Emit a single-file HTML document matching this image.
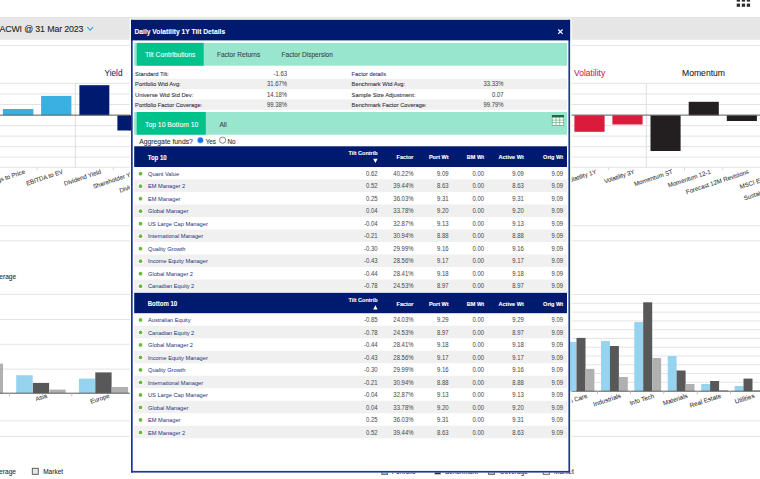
<!DOCTYPE html><html><head><meta charset="utf-8"><style>html,body{margin:0;padding:0;width:760px;height:479px;overflow:hidden;background:#fff}svg{display:block;font-family:"Liberation Sans",sans-serif}</style></head><body><svg width="760" height="479" viewBox="0 0 760 479" font-family="Liberation Sans, sans-serif"><rect x="736.70" y="-1.60" width="3.30" height="3.20" fill="#2b2b2b"/>
<rect x="736.70" y="3.60" width="3.30" height="3.20" fill="#2b2b2b"/>
<rect x="741.80" y="-1.60" width="3.30" height="3.20" fill="#2b2b2b"/>
<rect x="741.80" y="3.60" width="3.30" height="3.20" fill="#2b2b2b"/>
<rect x="746.80" y="-1.60" width="3.30" height="3.20" fill="#2b2b2b"/>
<rect x="746.80" y="3.60" width="3.30" height="3.20" fill="#2b2b2b"/>
<rect x="0.00" y="16.90" width="760.00" height="22.80" fill="#e6e6e6"/>
<text transform="translate(-0.60 31.80) scale(0.91 1)" font-size="9.7" fill="#262626" stroke="#262626" stroke-width="0.12" letter-spacing="-0.15">ACWI @ 31 Mar 2023</text>
<path d="M87.3 27.2 L90.15 30.2 L93.0 27.2" stroke="#35a5dc" stroke-width="1.2" fill="none"/>
<rect x="0.00" y="45.00" width="760.00" height="1.00" fill="#e8e8e8"/>
<text x="104.60" y="76.00" font-size="8.2" fill="#1f2b72" stroke="#1f2b72" stroke-width="0.08">Yield</text>
<text x="574.00" y="75.70" font-size="8.5" fill="#dc1a3c" stroke="#dc1a3c" stroke-width="0.08">Volatility</text>
<text x="682.00" y="75.70" font-size="8.6" fill="#222222" stroke="#222222" stroke-width="0.08">Momentum</text>
<rect x="0.00" y="82.80" width="760.00" height="1.00" fill="#e4e4e4"/>
<rect x="0.00" y="93.40" width="760.00" height="1.00" fill="#e4e4e4"/>
<rect x="0.00" y="104.00" width="760.00" height="1.00" fill="#e4e4e4"/>
<rect x="0.00" y="125.10" width="760.00" height="1.00" fill="#e4e4e4"/>
<rect x="0.00" y="135.60" width="760.00" height="1.00" fill="#e4e4e4"/>
<rect x="0.00" y="146.20" width="760.00" height="1.00" fill="#e4e4e4"/>
<rect x="0.00" y="156.60" width="760.00" height="1.00" fill="#e4e4e4"/>
<rect x="0.00" y="166.80" width="760.00" height="1.00" fill="#e4e4e4"/>
<rect x="74.85" y="83.00" width="0.90" height="84.30" fill="#dcdcdc"/>
<rect x="645.85" y="83.00" width="0.90" height="84.30" fill="#dcdcdc"/>
<rect x="36.70" y="167.30" width="0.80" height="3.00" fill="#cfcfcf"/>
<rect x="112.80" y="167.30" width="0.80" height="3.00" fill="#cfcfcf"/>
<rect x="607.90" y="167.30" width="0.80" height="3.00" fill="#cfcfcf"/>
<rect x="684.10" y="167.30" width="0.80" height="3.00" fill="#cfcfcf"/>
<rect x="722.40" y="167.30" width="0.80" height="3.00" fill="#cfcfcf"/>
<rect x="2.90" y="109.00" width="30.50" height="6.30" fill="#3aafe2"/>
<rect x="41.10" y="95.90" width="30.30" height="19.40" fill="#3aafe2"/>
<rect x="79.40" y="85.20" width="29.90" height="30.10" fill="#001a70"/>
<rect x="117.40" y="115.30" width="30.10" height="15.20" fill="#001a70"/>
<rect x="574.40" y="115.30" width="30.20" height="16.50" fill="#dc1a3c"/>
<rect x="612.40" y="115.30" width="30.20" height="9.20" fill="#dc1a3c"/>
<rect x="650.50" y="115.30" width="30.10" height="35.70" fill="#231f20"/>
<rect x="688.70" y="101.80" width="30.10" height="13.50" fill="#231f20"/>
<rect x="726.80" y="115.30" width="30.10" height="5.70" fill="#231f20"/>
<rect x="0.00" y="114.60" width="760.00" height="1.00" fill="#5c5c5c"/>
<text x="25.40" y="173.40" font-size="6.15" text-anchor="end" fill="#333333" stroke="#333333" stroke-width="0.06" transform="rotate(-18.5 25.40 173.40)">Earnings to Price</text>
<text x="63.50" y="173.40" font-size="6.15" text-anchor="end" fill="#333333" stroke="#333333" stroke-width="0.06" transform="rotate(-18.5 63.50 173.40)">EBITDA to EV</text>
<text x="101.60" y="173.40" font-size="6.15" text-anchor="end" fill="#333333" stroke="#333333" stroke-width="0.06" transform="rotate(-18.5 101.60 173.40)">Dividend Yield</text>
<text x="139.70" y="173.40" font-size="6.15" text-anchor="end" fill="#333333" stroke="#333333" stroke-width="0.06" transform="rotate(-18.5 139.70 173.40)">Shareholder Yield</text>
<text x="177.80" y="173.40" font-size="6.15" text-anchor="end" fill="#333333" stroke="#333333" stroke-width="0.06" transform="rotate(-18.5 177.80 173.40)">Dividend Payout Ratio</text>
<text x="596.90" y="173.40" font-size="6.15" text-anchor="end" fill="#333333" stroke="#333333" stroke-width="0.06" transform="rotate(-18.5 596.90 173.40)">Volatility 1Y</text>
<text x="635.00" y="173.40" font-size="6.15" text-anchor="end" fill="#333333" stroke="#333333" stroke-width="0.06" transform="rotate(-18.5 635.00 173.40)">Volatility 3Y</text>
<text x="673.10" y="173.40" font-size="6.15" text-anchor="end" fill="#333333" stroke="#333333" stroke-width="0.06" transform="rotate(-18.5 673.10 173.40)">Momentum ST</text>
<text x="711.20" y="173.40" font-size="6.15" text-anchor="end" fill="#333333" stroke="#333333" stroke-width="0.06" transform="rotate(-18.5 711.20 173.40)">Momentum 12-1</text>
<text x="749.30" y="173.40" font-size="6.15" text-anchor="end" fill="#333333" stroke="#333333" stroke-width="0.06" transform="rotate(-18.5 749.30 173.40)">Forecast 12M Revisions</text>
<text x="787.40" y="173.40" font-size="6.15" text-anchor="end" fill="#333333" stroke="#333333" stroke-width="0.06" transform="rotate(-18.5 787.40 173.40)">MSCI ESG Rating</text>
<text x="825.50" y="173.40" font-size="6.15" text-anchor="end" fill="#333333" stroke="#333333" stroke-width="0.06" transform="rotate(-18.5 825.50 173.40)">Sustainalytics ESG Risk Rating</text>
<rect x="0.00" y="225.20" width="760.00" height="1.00" fill="#e4e4e4"/>
<rect x="0.00" y="240.30" width="760.00" height="1.00" fill="#e4e4e4"/>
<text x="16.20" y="278.80" font-size="6.6" text-anchor="end" fill="#2a2a2a" stroke="#2a2a2a" stroke-width="0.08">Average</text>
<rect x="0.00" y="293.90" width="300.00" height="1.00" fill="#e4e4e4"/>
<rect x="0.00" y="319.00" width="300.00" height="1.00" fill="#e4e4e4"/>
<rect x="0.00" y="343.80" width="300.00" height="1.00" fill="#e4e4e4"/>
<rect x="0.00" y="368.60" width="300.00" height="1.00" fill="#e4e4e4"/>
<rect x="-5.00" y="363.60" width="8.00" height="29.60" fill="#b0b0b0"/>
<rect x="16.20" y="375.20" width="16.50" height="18.00" fill="#95d3ef"/>
<rect x="32.90" y="382.90" width="16.20" height="10.30" fill="#585858"/>
<rect x="49.50" y="389.60" width="16.10" height="3.60" fill="#b0b0b0"/>
<rect x="78.90" y="378.60" width="16.20" height="14.60" fill="#95d3ef"/>
<rect x="95.30" y="372.40" width="16.30" height="20.80" fill="#585858"/>
<rect x="111.90" y="387.00" width="16.20" height="6.20" fill="#b0b0b0"/>
<rect x="0.00" y="392.70" width="300.00" height="1.00" fill="#5a5a5a"/>
<rect x="9.00" y="393.20" width="0.80" height="3.20" fill="#b8b8b8"/>
<rect x="71.40" y="393.20" width="0.80" height="3.20" fill="#b8b8b8"/>
<text x="47.60" y="397.50" font-size="6.2" text-anchor="end" fill="#333333" stroke="#333333" stroke-width="0.06" transform="rotate(-18.5 47.60 397.50)">Asia</text>
<text x="110.00" y="397.50" font-size="6.2" text-anchor="end" fill="#333333" stroke="#333333" stroke-width="0.06" transform="rotate(-18.5 110.00 397.50)">Europe</text>
<rect x="300.00" y="294.10" width="460.00" height="1.00" fill="#e4e4e4"/>
<rect x="300.00" y="302.87" width="460.00" height="1.00" fill="#e4e4e4"/>
<rect x="300.00" y="311.64" width="460.00" height="1.00" fill="#e4e4e4"/>
<rect x="300.00" y="320.41" width="460.00" height="1.00" fill="#e4e4e4"/>
<rect x="300.00" y="329.18" width="460.00" height="1.00" fill="#e4e4e4"/>
<rect x="300.00" y="337.95" width="460.00" height="1.00" fill="#e4e4e4"/>
<rect x="300.00" y="346.72" width="460.00" height="1.00" fill="#e4e4e4"/>
<rect x="300.00" y="355.49" width="460.00" height="1.00" fill="#e4e4e4"/>
<rect x="300.00" y="364.26" width="460.00" height="1.00" fill="#e4e4e4"/>
<rect x="300.00" y="373.03" width="460.00" height="1.00" fill="#e4e4e4"/>
<rect x="300.00" y="381.80" width="460.00" height="1.00" fill="#e4e4e4"/>
<rect x="566.60" y="342.00" width="9.90" height="49.20" fill="#95d3ef"/>
<rect x="576.50" y="337.90" width="9.00" height="53.30" fill="#585858"/>
<rect x="585.50" y="368.90" width="8.90" height="22.30" fill="#b0b0b0"/>
<rect x="601.00" y="340.90" width="8.90" height="50.30" fill="#95d3ef"/>
<rect x="609.90" y="346.00" width="9.00" height="45.20" fill="#585858"/>
<rect x="618.90" y="377.00" width="8.90" height="14.20" fill="#b0b0b0"/>
<rect x="634.30" y="322.10" width="8.90" height="69.10" fill="#95d3ef"/>
<rect x="643.20" y="302.30" width="9.00" height="88.90" fill="#585858"/>
<rect x="652.20" y="358.00" width="8.90" height="33.20" fill="#b0b0b0"/>
<rect x="667.70" y="356.00" width="8.90" height="35.20" fill="#95d3ef"/>
<rect x="676.60" y="370.50" width="9.00" height="20.70" fill="#585858"/>
<rect x="685.60" y="384.00" width="8.90" height="7.20" fill="#b0b0b0"/>
<rect x="701.20" y="384.00" width="8.90" height="7.20" fill="#95d3ef"/>
<rect x="710.10" y="381.00" width="9.00" height="10.20" fill="#585858"/>
<rect x="719.10" y="390.00" width="8.90" height="1.20" fill="#b0b0b0"/>
<rect x="734.60" y="386.00" width="8.90" height="5.20" fill="#95d3ef"/>
<rect x="743.50" y="378.60" width="9.00" height="12.60" fill="#585858"/>
<rect x="752.50" y="390.00" width="8.90" height="1.20" fill="#b0b0b0"/>
<rect x="300.00" y="390.70" width="460.00" height="1.00" fill="#5a5a5a"/>
<rect x="597.00" y="391.20" width="0.80" height="3.00" fill="#b8b8b8"/>
<rect x="630.20" y="391.20" width="0.80" height="3.00" fill="#b8b8b8"/>
<rect x="663.40" y="391.20" width="0.80" height="3.00" fill="#b8b8b8"/>
<rect x="696.80" y="391.20" width="0.80" height="3.00" fill="#b8b8b8"/>
<rect x="730.20" y="391.20" width="0.80" height="3.00" fill="#b8b8b8"/>
<text x="587.90" y="397.60" font-size="6.3" text-anchor="end" fill="#333333" stroke="#333333" stroke-width="0.06" transform="rotate(-18 587.90 397.60)">Health Care</text>
<text x="621.30" y="397.60" font-size="6.3" text-anchor="end" fill="#333333" stroke="#333333" stroke-width="0.06" transform="rotate(-18 621.30 397.60)">Industrials</text>
<text x="654.60" y="397.60" font-size="6.3" text-anchor="end" fill="#333333" stroke="#333333" stroke-width="0.06" transform="rotate(-18 654.60 397.60)">Info Tech</text>
<text x="688.00" y="397.60" font-size="6.3" text-anchor="end" fill="#333333" stroke="#333333" stroke-width="0.06" transform="rotate(-18 688.00 397.60)">Materials</text>
<text x="721.50" y="397.60" font-size="6.3" text-anchor="end" fill="#333333" stroke="#333333" stroke-width="0.06" transform="rotate(-18 721.50 397.60)">Real Estate</text>
<text x="754.90" y="397.60" font-size="6.3" text-anchor="end" fill="#333333" stroke="#333333" stroke-width="0.06" transform="rotate(-18 754.90 397.60)">Utilities</text>
<rect x="0.00" y="420.30" width="760.00" height="1.00" fill="#e4e4e4"/>
<rect x="0.00" y="435.80" width="760.00" height="1.00" fill="#e4e4e4"/>
<text x="16.00" y="473.80" font-size="6.6" text-anchor="end" fill="#2a2a2a" stroke="#2a2a2a" stroke-width="0.08">Average</text>
<rect x="32.30" y="468.30" width="6.00" height="6.00" fill="#e6e6e6" stroke="#555" stroke-width="0.9"/>
<text x="43.20" y="473.80" font-size="6.5" fill="#2a2a2a" stroke="#2a2a2a" stroke-width="0.08">Market</text>
<rect x="381.80" y="468.50" width="5.80" height="5.80" fill="#95d3ef" stroke="#555" stroke-width="0.9"/>
<text x="391.70" y="473.80" font-size="6.5" fill="#2a2a2a" stroke="#2a2a2a" stroke-width="0.08">Portfolio</text>
<rect x="434.70" y="468.50" width="6.00" height="5.80" fill="#333"/>
<text x="445.00" y="473.80" font-size="6.5" fill="#2a2a2a" stroke="#2a2a2a" stroke-width="0.08">Benchmark</text>
<rect x="488.40" y="468.50" width="6.20" height="5.80" fill="#c8c8c8" stroke="#555" stroke-width="0.9"/>
<text x="499.70" y="473.80" font-size="6.5" fill="#2a2a2a" stroke="#2a2a2a" stroke-width="0.08">Coverage</text>
<rect x="543.20" y="468.50" width="6.20" height="5.80" fill="#fff" stroke="#555" stroke-width="0.9"/>
<text x="554.00" y="473.80" font-size="6.5" fill="#2a2a2a" stroke="#2a2a2a" stroke-width="0.08">Market</text>
<rect x="129.80" y="18.70" width="1.20" height="453.90" fill="#ffffff"/>
<rect x="570.10" y="18.70" width="1.50" height="453.90" fill="#ffffff"/>
<rect x="129.90" y="18.70" width="441.30" height="1.10" fill="#ffffff"/>
<rect x="129.00" y="115.30" width="2.50" height="15.20" fill="#001a70"/>
<rect x="569.50" y="342.00" width="6.50" height="49.20" fill="#95d3ef"/>
<rect x="131.00" y="19.80" width="439.10" height="452.80" fill="#ffffff"/>
<rect x="131.00" y="19.80" width="1.70" height="452.80" fill="#1f3790"/>
<rect x="568.40" y="19.80" width="1.70" height="452.80" fill="#1f3790"/>
<rect x="131.00" y="470.90" width="439.10" height="1.70" fill="#1f3790"/>
<rect x="131.00" y="19.80" width="439.10" height="20.60" fill="#001a70"/>
<text x="134.50" y="33.80" font-size="6.7" font-weight="bold" fill="#ffffff" stroke="#ffffff" stroke-width="0.08">Daily Volatility 1Y Tilt Details</text>
<path d="M558.2 29.5 L562.6 33.9 M562.6 29.5 L558.2 33.9" stroke="#fff" stroke-width="1.15"/>
<rect x="134.20" y="42.90" width="432.80" height="22.80" fill="#99e6cf"/>
<rect x="136.75" y="42.90" width="66.95" height="22.80" fill="#00c28a"/>
<text x="145.00" y="57.20" font-size="6.75" fill="#ffffff" stroke="#ffffff" stroke-width="0.08">Tilt Contributions</text>
<text x="216.90" y="57.20" font-size="6.55" fill="#3b4442" stroke="#3b4442" stroke-width="0.08">Factor Returns</text>
<text x="281.60" y="57.20" font-size="6.55" fill="#3b4442" stroke="#3b4442" stroke-width="0.08">Factor Dispersion</text>
<rect x="134.20" y="78.70" width="432.80" height="10.40" fill="#f0f0f0"/>
<rect x="134.20" y="99.50" width="432.80" height="10.30" fill="#f0f0f0"/>
<text transform="translate(135.10 76.10) scale(0.93 1)" font-size="6.2" fill="#2e2e3a" stroke="#2e2e3a" stroke-width="0.08">Standard Tilt:</text>
<text transform="translate(287.00 76.10) scale(0.94 1)" font-size="6.3" text-anchor="end" fill="#444444" stroke="#444444" stroke-width="0.03">-1.63</text>
<text transform="translate(351.60 76.10) scale(0.93 1)" font-size="6.2" fill="#3b2f7c" stroke="#3b2f7c" stroke-width="0.08">Factor details</text>
<text transform="translate(135.10 86.45) scale(0.93 1)" font-size="6.2" fill="#2e2e3a" stroke="#2e2e3a" stroke-width="0.08">Portfolio Wtd Avg:</text>
<text transform="translate(287.00 86.45) scale(0.94 1)" font-size="6.3" text-anchor="end" fill="#444444" stroke="#444444" stroke-width="0.03">31.67%</text>
<text transform="translate(351.60 86.45) scale(0.93 1)" font-size="6.2" fill="#2e2e3a" stroke="#2e2e3a" stroke-width="0.08">Benchmark Wtd Avg:</text>
<text transform="translate(503.50 86.45) scale(0.94 1)" font-size="6.3" text-anchor="end" fill="#444444" stroke="#444444" stroke-width="0.03">33.33%</text>
<text transform="translate(135.10 96.80) scale(0.93 1)" font-size="6.2" fill="#2e2e3a" stroke="#2e2e3a" stroke-width="0.08">Universe Wtd Std Dev:</text>
<text transform="translate(287.00 96.80) scale(0.94 1)" font-size="6.3" text-anchor="end" fill="#444444" stroke="#444444" stroke-width="0.03">14.18%</text>
<text transform="translate(351.60 96.80) scale(0.93 1)" font-size="6.2" fill="#2e2e3a" stroke="#2e2e3a" stroke-width="0.08">Sample Size Adjustment:</text>
<text transform="translate(503.50 96.80) scale(0.94 1)" font-size="6.3" text-anchor="end" fill="#444444" stroke="#444444" stroke-width="0.03">0.07</text>
<text transform="translate(135.10 107.15) scale(0.93 1)" font-size="6.2" fill="#2e2e3a" stroke="#2e2e3a" stroke-width="0.08">Portfolio Factor Coverage:</text>
<text transform="translate(287.00 107.15) scale(0.94 1)" font-size="6.3" text-anchor="end" fill="#444444" stroke="#444444" stroke-width="0.03">99.38%</text>
<text transform="translate(351.60 107.15) scale(0.93 1)" font-size="6.2" fill="#2e2e3a" stroke="#2e2e3a" stroke-width="0.08">Benchmark Factor Coverage:</text>
<text transform="translate(503.50 107.15) scale(0.94 1)" font-size="6.3" text-anchor="end" fill="#444444" stroke="#444444" stroke-width="0.03">99.79%</text>
<rect x="134.20" y="112.00" width="432.80" height="22.70" fill="#99e6cf"/>
<rect x="136.75" y="112.00" width="69.05" height="22.70" fill="#00c28a"/>
<text x="145.00" y="126.50" font-size="6.8" fill="#ffffff" stroke="#ffffff" stroke-width="0.08">Top 10 Bottom 10</text>
<text x="219.40" y="126.50" font-size="6.6" fill="#3b4442" stroke="#3b4442" stroke-width="0.08">All</text>
<rect x="551.90" y="115.00" width="12.00" height="10.70" fill="#3d9463"/>
<rect x="551.90" y="115.00" width="12.00" height="2.10" fill="#1d6b3e"/>
<rect x="552.45" y="117.60" width="3.30" height="2.20" fill="#ffffff"/>
<rect x="556.28" y="117.60" width="3.30" height="2.20" fill="#ffffff"/>
<rect x="560.11" y="117.60" width="3.30" height="2.20" fill="#ffffff"/>
<rect x="552.45" y="120.30" width="3.30" height="2.20" fill="#ffffff"/>
<rect x="556.28" y="120.30" width="3.30" height="2.20" fill="#ffffff"/>
<rect x="560.11" y="120.30" width="3.30" height="2.20" fill="#ffffff"/>
<rect x="552.45" y="123.00" width="3.30" height="2.20" fill="#ffffff"/>
<rect x="556.28" y="123.00" width="3.30" height="2.20" fill="#ffffff"/>
<rect x="560.11" y="123.00" width="3.30" height="2.20" fill="#ffffff"/>
<text x="139.20" y="143.60" font-size="6.8" fill="#2e2e2e" stroke="#2e2e2e" stroke-width="0.08">Aggregate funds?</text>
<circle cx="200.4" cy="140.2" r="3.5" fill="#bcd7fb"/>
<circle cx="200.4" cy="140.2" r="2.6" fill="#1a6ef2"/>
<circle cx="200.4" cy="140.2" r="1.1" fill="#1a6ef2"/>
<text x="205.70" y="144.30" font-size="6.3" fill="#2e2e2e" stroke="#2e2e2e" stroke-width="0.08">Yes</text>
<circle cx="222.6" cy="140.2" r="3.1" fill="#fff" stroke="#555" stroke-width="0.7"/>
<text x="227.40" y="144.30" font-size="6.3" fill="#2e2e2e" stroke="#2e2e2e" stroke-width="0.08">No</text>
<rect x="134.20" y="146.30" width="432.80" height="20.70" fill="#001a70"/>
<text transform="translate(147.70 159.50) scale(0.96 1)" font-size="6.3" font-weight="bold" fill="#fff" stroke="#fff" stroke-width="0.08">Top 10</text>
<text transform="translate(377.60 155.30) scale(0.9 1)" font-size="6.1" font-weight="bold" text-anchor="end" fill="#fff" stroke="#fff" stroke-width="0.08">Tilt Contrib</text>
<path d="M373.20 158.80 L377.60 158.80 L375.40 162.90 Z" fill="#fff"/>
<text transform="translate(413.50 159.10) scale(0.91 1)" font-size="6.1" font-weight="bold" text-anchor="end" fill="#fff" stroke="#fff" stroke-width="0.12">Factor</text>
<text transform="translate(448.60 159.10) scale(0.91 1)" font-size="6.1" font-weight="bold" text-anchor="end" fill="#fff" stroke="#fff" stroke-width="0.12">Port Wt</text>
<text transform="translate(484.00 159.10) scale(0.91 1)" font-size="6.1" font-weight="bold" text-anchor="end" fill="#fff" stroke="#fff" stroke-width="0.12">BM Wt</text>
<text transform="translate(523.80 159.10) scale(0.91 1)" font-size="6.1" font-weight="bold" text-anchor="end" fill="#fff" stroke="#fff" stroke-width="0.12">Active Wt</text>
<text transform="translate(563.10 159.10) scale(0.91 1)" font-size="6.1" font-weight="bold" text-anchor="end" fill="#fff" stroke="#fff" stroke-width="0.12">Orig Wt</text>
<circle cx="140.5" cy="173.70" r="2.9" fill="#fff"/>
<circle cx="140.5" cy="173.70" r="1.85" fill="#6bb83c"/>
<text transform="translate(148.00 175.80) scale(0.955 1)" font-size="5.95" fill="#25307a">Quant Value</text>
<text transform="translate(377.60 175.90) scale(0.93 1)" font-size="6.4" text-anchor="end" fill="#4a4a4a" stroke="#4a4a4a" stroke-width="0.03">0.62</text>
<text transform="translate(413.50 175.90) scale(0.93 1)" font-size="6.4" text-anchor="end" fill="#4a4a4a" stroke="#4a4a4a" stroke-width="0.03">40.22%</text>
<text transform="translate(448.60 175.90) scale(0.93 1)" font-size="6.4" text-anchor="end" fill="#4a4a4a" stroke="#4a4a4a" stroke-width="0.03">9.09</text>
<text transform="translate(484.00 175.90) scale(0.93 1)" font-size="6.4" text-anchor="end" fill="#4a4a4a" stroke="#4a4a4a" stroke-width="0.03">0.00</text>
<text transform="translate(523.80 175.90) scale(0.93 1)" font-size="6.4" text-anchor="end" fill="#4a4a4a" stroke="#4a4a4a" stroke-width="0.03">9.09</text>
<text transform="translate(563.10 175.90) scale(0.93 1)" font-size="6.4" text-anchor="end" fill="#4a4a4a" stroke="#4a4a4a" stroke-width="0.03">9.09</text>
<rect x="134.20" y="179.50" width="432.80" height="12.50" fill="#f0f0f0"/>
<circle cx="140.5" cy="186.20" r="2.9" fill="#fff"/>
<circle cx="140.5" cy="186.20" r="1.85" fill="#6bb83c"/>
<text transform="translate(148.00 188.30) scale(0.955 1)" font-size="5.95" fill="#25307a">EM Manager 2</text>
<text transform="translate(377.60 188.40) scale(0.93 1)" font-size="6.4" text-anchor="end" fill="#4a4a4a" stroke="#4a4a4a" stroke-width="0.03">0.52</text>
<text transform="translate(413.50 188.40) scale(0.93 1)" font-size="6.4" text-anchor="end" fill="#4a4a4a" stroke="#4a4a4a" stroke-width="0.03">39.44%</text>
<text transform="translate(448.60 188.40) scale(0.93 1)" font-size="6.4" text-anchor="end" fill="#4a4a4a" stroke="#4a4a4a" stroke-width="0.03">8.63</text>
<text transform="translate(484.00 188.40) scale(0.93 1)" font-size="6.4" text-anchor="end" fill="#4a4a4a" stroke="#4a4a4a" stroke-width="0.03">0.00</text>
<text transform="translate(523.80 188.40) scale(0.93 1)" font-size="6.4" text-anchor="end" fill="#4a4a4a" stroke="#4a4a4a" stroke-width="0.03">8.63</text>
<text transform="translate(563.10 188.40) scale(0.93 1)" font-size="6.4" text-anchor="end" fill="#4a4a4a" stroke="#4a4a4a" stroke-width="0.03">9.09</text>
<circle cx="140.5" cy="198.70" r="2.9" fill="#fff"/>
<circle cx="140.5" cy="198.70" r="1.85" fill="#6bb83c"/>
<text transform="translate(148.00 200.80) scale(0.955 1)" font-size="5.95" fill="#25307a">EM Manager</text>
<text transform="translate(377.60 200.90) scale(0.93 1)" font-size="6.4" text-anchor="end" fill="#4a4a4a" stroke="#4a4a4a" stroke-width="0.03">0.25</text>
<text transform="translate(413.50 200.90) scale(0.93 1)" font-size="6.4" text-anchor="end" fill="#4a4a4a" stroke="#4a4a4a" stroke-width="0.03">36.03%</text>
<text transform="translate(448.60 200.90) scale(0.93 1)" font-size="6.4" text-anchor="end" fill="#4a4a4a" stroke="#4a4a4a" stroke-width="0.03">9.31</text>
<text transform="translate(484.00 200.90) scale(0.93 1)" font-size="6.4" text-anchor="end" fill="#4a4a4a" stroke="#4a4a4a" stroke-width="0.03">0.00</text>
<text transform="translate(523.80 200.90) scale(0.93 1)" font-size="6.4" text-anchor="end" fill="#4a4a4a" stroke="#4a4a4a" stroke-width="0.03">9.31</text>
<text transform="translate(563.10 200.90) scale(0.93 1)" font-size="6.4" text-anchor="end" fill="#4a4a4a" stroke="#4a4a4a" stroke-width="0.03">9.09</text>
<rect x="134.20" y="204.50" width="432.80" height="12.50" fill="#f0f0f0"/>
<circle cx="140.5" cy="211.20" r="2.9" fill="#fff"/>
<circle cx="140.5" cy="211.20" r="1.85" fill="#6bb83c"/>
<text transform="translate(148.00 213.30) scale(0.955 1)" font-size="5.95" fill="#25307a">Global Manager</text>
<text transform="translate(377.60 213.40) scale(0.93 1)" font-size="6.4" text-anchor="end" fill="#4a4a4a" stroke="#4a4a4a" stroke-width="0.03">0.04</text>
<text transform="translate(413.50 213.40) scale(0.93 1)" font-size="6.4" text-anchor="end" fill="#4a4a4a" stroke="#4a4a4a" stroke-width="0.03">33.78%</text>
<text transform="translate(448.60 213.40) scale(0.93 1)" font-size="6.4" text-anchor="end" fill="#4a4a4a" stroke="#4a4a4a" stroke-width="0.03">9.20</text>
<text transform="translate(484.00 213.40) scale(0.93 1)" font-size="6.4" text-anchor="end" fill="#4a4a4a" stroke="#4a4a4a" stroke-width="0.03">0.00</text>
<text transform="translate(523.80 213.40) scale(0.93 1)" font-size="6.4" text-anchor="end" fill="#4a4a4a" stroke="#4a4a4a" stroke-width="0.03">9.20</text>
<text transform="translate(563.10 213.40) scale(0.93 1)" font-size="6.4" text-anchor="end" fill="#4a4a4a" stroke="#4a4a4a" stroke-width="0.03">9.09</text>
<circle cx="140.5" cy="223.70" r="2.9" fill="#fff"/>
<circle cx="140.5" cy="223.70" r="1.85" fill="#6bb83c"/>
<text transform="translate(148.00 225.80) scale(0.955 1)" font-size="5.95" fill="#25307a">US Large Cap Manager</text>
<text transform="translate(377.60 225.90) scale(0.93 1)" font-size="6.4" text-anchor="end" fill="#4a4a4a" stroke="#4a4a4a" stroke-width="0.03">-0.04</text>
<text transform="translate(413.50 225.90) scale(0.93 1)" font-size="6.4" text-anchor="end" fill="#4a4a4a" stroke="#4a4a4a" stroke-width="0.03">32.87%</text>
<text transform="translate(448.60 225.90) scale(0.93 1)" font-size="6.4" text-anchor="end" fill="#4a4a4a" stroke="#4a4a4a" stroke-width="0.03">9.13</text>
<text transform="translate(484.00 225.90) scale(0.93 1)" font-size="6.4" text-anchor="end" fill="#4a4a4a" stroke="#4a4a4a" stroke-width="0.03">0.00</text>
<text transform="translate(523.80 225.90) scale(0.93 1)" font-size="6.4" text-anchor="end" fill="#4a4a4a" stroke="#4a4a4a" stroke-width="0.03">9.13</text>
<text transform="translate(563.10 225.90) scale(0.93 1)" font-size="6.4" text-anchor="end" fill="#4a4a4a" stroke="#4a4a4a" stroke-width="0.03">9.09</text>
<rect x="134.20" y="229.50" width="432.80" height="12.50" fill="#f0f0f0"/>
<circle cx="140.5" cy="236.20" r="2.9" fill="#fff"/>
<circle cx="140.5" cy="236.20" r="1.85" fill="#6bb83c"/>
<text transform="translate(148.00 238.30) scale(0.955 1)" font-size="5.95" fill="#25307a">International Manager</text>
<text transform="translate(377.60 238.40) scale(0.93 1)" font-size="6.4" text-anchor="end" fill="#4a4a4a" stroke="#4a4a4a" stroke-width="0.03">-0.21</text>
<text transform="translate(413.50 238.40) scale(0.93 1)" font-size="6.4" text-anchor="end" fill="#4a4a4a" stroke="#4a4a4a" stroke-width="0.03">30.94%</text>
<text transform="translate(448.60 238.40) scale(0.93 1)" font-size="6.4" text-anchor="end" fill="#4a4a4a" stroke="#4a4a4a" stroke-width="0.03">8.88</text>
<text transform="translate(484.00 238.40) scale(0.93 1)" font-size="6.4" text-anchor="end" fill="#4a4a4a" stroke="#4a4a4a" stroke-width="0.03">0.00</text>
<text transform="translate(523.80 238.40) scale(0.93 1)" font-size="6.4" text-anchor="end" fill="#4a4a4a" stroke="#4a4a4a" stroke-width="0.03">8.88</text>
<text transform="translate(563.10 238.40) scale(0.93 1)" font-size="6.4" text-anchor="end" fill="#4a4a4a" stroke="#4a4a4a" stroke-width="0.03">9.09</text>
<circle cx="140.5" cy="248.70" r="2.9" fill="#fff"/>
<circle cx="140.5" cy="248.70" r="1.85" fill="#6bb83c"/>
<text transform="translate(148.00 250.80) scale(0.955 1)" font-size="5.95" fill="#25307a">Quality Growth</text>
<text transform="translate(377.60 250.90) scale(0.93 1)" font-size="6.4" text-anchor="end" fill="#4a4a4a" stroke="#4a4a4a" stroke-width="0.03">-0.30</text>
<text transform="translate(413.50 250.90) scale(0.93 1)" font-size="6.4" text-anchor="end" fill="#4a4a4a" stroke="#4a4a4a" stroke-width="0.03">29.99%</text>
<text transform="translate(448.60 250.90) scale(0.93 1)" font-size="6.4" text-anchor="end" fill="#4a4a4a" stroke="#4a4a4a" stroke-width="0.03">9.16</text>
<text transform="translate(484.00 250.90) scale(0.93 1)" font-size="6.4" text-anchor="end" fill="#4a4a4a" stroke="#4a4a4a" stroke-width="0.03">0.00</text>
<text transform="translate(523.80 250.90) scale(0.93 1)" font-size="6.4" text-anchor="end" fill="#4a4a4a" stroke="#4a4a4a" stroke-width="0.03">9.16</text>
<text transform="translate(563.10 250.90) scale(0.93 1)" font-size="6.4" text-anchor="end" fill="#4a4a4a" stroke="#4a4a4a" stroke-width="0.03">9.09</text>
<rect x="134.20" y="254.50" width="432.80" height="12.50" fill="#f0f0f0"/>
<circle cx="140.5" cy="261.20" r="2.9" fill="#fff"/>
<circle cx="140.5" cy="261.20" r="1.85" fill="#6bb83c"/>
<text transform="translate(148.00 263.30) scale(0.955 1)" font-size="5.95" fill="#25307a">Income Equity Manager</text>
<text transform="translate(377.60 263.40) scale(0.93 1)" font-size="6.4" text-anchor="end" fill="#4a4a4a" stroke="#4a4a4a" stroke-width="0.03">-0.43</text>
<text transform="translate(413.50 263.40) scale(0.93 1)" font-size="6.4" text-anchor="end" fill="#4a4a4a" stroke="#4a4a4a" stroke-width="0.03">28.56%</text>
<text transform="translate(448.60 263.40) scale(0.93 1)" font-size="6.4" text-anchor="end" fill="#4a4a4a" stroke="#4a4a4a" stroke-width="0.03">9.17</text>
<text transform="translate(484.00 263.40) scale(0.93 1)" font-size="6.4" text-anchor="end" fill="#4a4a4a" stroke="#4a4a4a" stroke-width="0.03">0.00</text>
<text transform="translate(523.80 263.40) scale(0.93 1)" font-size="6.4" text-anchor="end" fill="#4a4a4a" stroke="#4a4a4a" stroke-width="0.03">9.17</text>
<text transform="translate(563.10 263.40) scale(0.93 1)" font-size="6.4" text-anchor="end" fill="#4a4a4a" stroke="#4a4a4a" stroke-width="0.03">9.09</text>
<circle cx="140.5" cy="273.70" r="2.9" fill="#fff"/>
<circle cx="140.5" cy="273.70" r="1.85" fill="#6bb83c"/>
<text transform="translate(148.00 275.80) scale(0.955 1)" font-size="5.95" fill="#25307a">Global Manager 2</text>
<text transform="translate(377.60 275.90) scale(0.93 1)" font-size="6.4" text-anchor="end" fill="#4a4a4a" stroke="#4a4a4a" stroke-width="0.03">-0.44</text>
<text transform="translate(413.50 275.90) scale(0.93 1)" font-size="6.4" text-anchor="end" fill="#4a4a4a" stroke="#4a4a4a" stroke-width="0.03">28.41%</text>
<text transform="translate(448.60 275.90) scale(0.93 1)" font-size="6.4" text-anchor="end" fill="#4a4a4a" stroke="#4a4a4a" stroke-width="0.03">9.18</text>
<text transform="translate(484.00 275.90) scale(0.93 1)" font-size="6.4" text-anchor="end" fill="#4a4a4a" stroke="#4a4a4a" stroke-width="0.03">0.00</text>
<text transform="translate(523.80 275.90) scale(0.93 1)" font-size="6.4" text-anchor="end" fill="#4a4a4a" stroke="#4a4a4a" stroke-width="0.03">9.18</text>
<text transform="translate(563.10 275.90) scale(0.93 1)" font-size="6.4" text-anchor="end" fill="#4a4a4a" stroke="#4a4a4a" stroke-width="0.03">9.09</text>
<rect x="134.20" y="279.50" width="432.80" height="12.50" fill="#f0f0f0"/>
<circle cx="140.5" cy="286.20" r="2.9" fill="#fff"/>
<circle cx="140.5" cy="286.20" r="1.85" fill="#6bb83c"/>
<text transform="translate(148.00 288.30) scale(0.955 1)" font-size="5.95" fill="#25307a">Canadian Equity 2</text>
<text transform="translate(377.60 288.40) scale(0.93 1)" font-size="6.4" text-anchor="end" fill="#4a4a4a" stroke="#4a4a4a" stroke-width="0.03">-0.78</text>
<text transform="translate(413.50 288.40) scale(0.93 1)" font-size="6.4" text-anchor="end" fill="#4a4a4a" stroke="#4a4a4a" stroke-width="0.03">24.53%</text>
<text transform="translate(448.60 288.40) scale(0.93 1)" font-size="6.4" text-anchor="end" fill="#4a4a4a" stroke="#4a4a4a" stroke-width="0.03">8.97</text>
<text transform="translate(484.00 288.40) scale(0.93 1)" font-size="6.4" text-anchor="end" fill="#4a4a4a" stroke="#4a4a4a" stroke-width="0.03">0.00</text>
<text transform="translate(523.80 288.40) scale(0.93 1)" font-size="6.4" text-anchor="end" fill="#4a4a4a" stroke="#4a4a4a" stroke-width="0.03">8.97</text>
<text transform="translate(563.10 288.40) scale(0.93 1)" font-size="6.4" text-anchor="end" fill="#4a4a4a" stroke="#4a4a4a" stroke-width="0.03">9.09</text>
<rect x="134.20" y="292.80" width="432.80" height="20.40" fill="#001a70"/>
<text transform="translate(147.70 306.00) scale(0.96 1)" font-size="6.3" font-weight="bold" fill="#fff" stroke="#fff" stroke-width="0.08">Bottom 10</text>
<text transform="translate(377.60 301.80) scale(0.9 1)" font-size="6.1" font-weight="bold" text-anchor="end" fill="#fff" stroke="#fff" stroke-width="0.08">Tilt Contrib</text>
<path d="M373.20 309.40 L377.60 309.40 L375.40 305.30 Z" fill="#fff"/>
<text transform="translate(413.50 305.60) scale(0.91 1)" font-size="6.1" font-weight="bold" text-anchor="end" fill="#fff" stroke="#fff" stroke-width="0.12">Factor</text>
<text transform="translate(448.60 305.60) scale(0.91 1)" font-size="6.1" font-weight="bold" text-anchor="end" fill="#fff" stroke="#fff" stroke-width="0.12">Port Wt</text>
<text transform="translate(484.00 305.60) scale(0.91 1)" font-size="6.1" font-weight="bold" text-anchor="end" fill="#fff" stroke="#fff" stroke-width="0.12">BM Wt</text>
<text transform="translate(523.80 305.60) scale(0.91 1)" font-size="6.1" font-weight="bold" text-anchor="end" fill="#fff" stroke="#fff" stroke-width="0.12">Active Wt</text>
<text transform="translate(563.10 305.60) scale(0.91 1)" font-size="6.1" font-weight="bold" text-anchor="end" fill="#fff" stroke="#fff" stroke-width="0.12">Orig Wt</text>
<circle cx="140.5" cy="319.90" r="2.9" fill="#fff"/>
<circle cx="140.5" cy="319.90" r="1.85" fill="#6bb83c"/>
<text transform="translate(148.00 322.00) scale(0.955 1)" font-size="5.95" fill="#25307a">Australian Equity</text>
<text transform="translate(377.60 322.10) scale(0.93 1)" font-size="6.4" text-anchor="end" fill="#4a4a4a" stroke="#4a4a4a" stroke-width="0.03">-0.85</text>
<text transform="translate(413.50 322.10) scale(0.93 1)" font-size="6.4" text-anchor="end" fill="#4a4a4a" stroke="#4a4a4a" stroke-width="0.03">24.03%</text>
<text transform="translate(448.60 322.10) scale(0.93 1)" font-size="6.4" text-anchor="end" fill="#4a4a4a" stroke="#4a4a4a" stroke-width="0.03">9.29</text>
<text transform="translate(484.00 322.10) scale(0.93 1)" font-size="6.4" text-anchor="end" fill="#4a4a4a" stroke="#4a4a4a" stroke-width="0.03">0.00</text>
<text transform="translate(523.80 322.10) scale(0.93 1)" font-size="6.4" text-anchor="end" fill="#4a4a4a" stroke="#4a4a4a" stroke-width="0.03">9.29</text>
<text transform="translate(563.10 322.10) scale(0.93 1)" font-size="6.4" text-anchor="end" fill="#4a4a4a" stroke="#4a4a4a" stroke-width="0.03">9.09</text>
<rect x="134.20" y="325.70" width="432.80" height="12.50" fill="#f0f0f0"/>
<circle cx="140.5" cy="332.40" r="2.9" fill="#fff"/>
<circle cx="140.5" cy="332.40" r="1.85" fill="#6bb83c"/>
<text transform="translate(148.00 334.50) scale(0.955 1)" font-size="5.95" fill="#25307a">Canadian Equity 2</text>
<text transform="translate(377.60 334.60) scale(0.93 1)" font-size="6.4" text-anchor="end" fill="#4a4a4a" stroke="#4a4a4a" stroke-width="0.03">-0.78</text>
<text transform="translate(413.50 334.60) scale(0.93 1)" font-size="6.4" text-anchor="end" fill="#4a4a4a" stroke="#4a4a4a" stroke-width="0.03">24.53%</text>
<text transform="translate(448.60 334.60) scale(0.93 1)" font-size="6.4" text-anchor="end" fill="#4a4a4a" stroke="#4a4a4a" stroke-width="0.03">8.97</text>
<text transform="translate(484.00 334.60) scale(0.93 1)" font-size="6.4" text-anchor="end" fill="#4a4a4a" stroke="#4a4a4a" stroke-width="0.03">0.00</text>
<text transform="translate(523.80 334.60) scale(0.93 1)" font-size="6.4" text-anchor="end" fill="#4a4a4a" stroke="#4a4a4a" stroke-width="0.03">8.97</text>
<text transform="translate(563.10 334.60) scale(0.93 1)" font-size="6.4" text-anchor="end" fill="#4a4a4a" stroke="#4a4a4a" stroke-width="0.03">9.09</text>
<circle cx="140.5" cy="344.90" r="2.9" fill="#fff"/>
<circle cx="140.5" cy="344.90" r="1.85" fill="#6bb83c"/>
<text transform="translate(148.00 347.00) scale(0.955 1)" font-size="5.95" fill="#25307a">Global Manager 2</text>
<text transform="translate(377.60 347.10) scale(0.93 1)" font-size="6.4" text-anchor="end" fill="#4a4a4a" stroke="#4a4a4a" stroke-width="0.03">-0.44</text>
<text transform="translate(413.50 347.10) scale(0.93 1)" font-size="6.4" text-anchor="end" fill="#4a4a4a" stroke="#4a4a4a" stroke-width="0.03">28.41%</text>
<text transform="translate(448.60 347.10) scale(0.93 1)" font-size="6.4" text-anchor="end" fill="#4a4a4a" stroke="#4a4a4a" stroke-width="0.03">9.18</text>
<text transform="translate(484.00 347.10) scale(0.93 1)" font-size="6.4" text-anchor="end" fill="#4a4a4a" stroke="#4a4a4a" stroke-width="0.03">0.00</text>
<text transform="translate(523.80 347.10) scale(0.93 1)" font-size="6.4" text-anchor="end" fill="#4a4a4a" stroke="#4a4a4a" stroke-width="0.03">9.18</text>
<text transform="translate(563.10 347.10) scale(0.93 1)" font-size="6.4" text-anchor="end" fill="#4a4a4a" stroke="#4a4a4a" stroke-width="0.03">9.09</text>
<rect x="134.20" y="350.70" width="432.80" height="12.50" fill="#f0f0f0"/>
<circle cx="140.5" cy="357.40" r="2.9" fill="#fff"/>
<circle cx="140.5" cy="357.40" r="1.85" fill="#6bb83c"/>
<text transform="translate(148.00 359.50) scale(0.955 1)" font-size="5.95" fill="#25307a">Income Equity Manager</text>
<text transform="translate(377.60 359.60) scale(0.93 1)" font-size="6.4" text-anchor="end" fill="#4a4a4a" stroke="#4a4a4a" stroke-width="0.03">-0.43</text>
<text transform="translate(413.50 359.60) scale(0.93 1)" font-size="6.4" text-anchor="end" fill="#4a4a4a" stroke="#4a4a4a" stroke-width="0.03">28.56%</text>
<text transform="translate(448.60 359.60) scale(0.93 1)" font-size="6.4" text-anchor="end" fill="#4a4a4a" stroke="#4a4a4a" stroke-width="0.03">9.17</text>
<text transform="translate(484.00 359.60) scale(0.93 1)" font-size="6.4" text-anchor="end" fill="#4a4a4a" stroke="#4a4a4a" stroke-width="0.03">0.00</text>
<text transform="translate(523.80 359.60) scale(0.93 1)" font-size="6.4" text-anchor="end" fill="#4a4a4a" stroke="#4a4a4a" stroke-width="0.03">9.17</text>
<text transform="translate(563.10 359.60) scale(0.93 1)" font-size="6.4" text-anchor="end" fill="#4a4a4a" stroke="#4a4a4a" stroke-width="0.03">9.09</text>
<circle cx="140.5" cy="369.90" r="2.9" fill="#fff"/>
<circle cx="140.5" cy="369.90" r="1.85" fill="#6bb83c"/>
<text transform="translate(148.00 372.00) scale(0.955 1)" font-size="5.95" fill="#25307a">Quality Growth</text>
<text transform="translate(377.60 372.10) scale(0.93 1)" font-size="6.4" text-anchor="end" fill="#4a4a4a" stroke="#4a4a4a" stroke-width="0.03">-0.30</text>
<text transform="translate(413.50 372.10) scale(0.93 1)" font-size="6.4" text-anchor="end" fill="#4a4a4a" stroke="#4a4a4a" stroke-width="0.03">29.99%</text>
<text transform="translate(448.60 372.10) scale(0.93 1)" font-size="6.4" text-anchor="end" fill="#4a4a4a" stroke="#4a4a4a" stroke-width="0.03">9.16</text>
<text transform="translate(484.00 372.10) scale(0.93 1)" font-size="6.4" text-anchor="end" fill="#4a4a4a" stroke="#4a4a4a" stroke-width="0.03">0.00</text>
<text transform="translate(523.80 372.10) scale(0.93 1)" font-size="6.4" text-anchor="end" fill="#4a4a4a" stroke="#4a4a4a" stroke-width="0.03">9.16</text>
<text transform="translate(563.10 372.10) scale(0.93 1)" font-size="6.4" text-anchor="end" fill="#4a4a4a" stroke="#4a4a4a" stroke-width="0.03">9.09</text>
<rect x="134.20" y="375.70" width="432.80" height="12.50" fill="#f0f0f0"/>
<circle cx="140.5" cy="382.40" r="2.9" fill="#fff"/>
<circle cx="140.5" cy="382.40" r="1.85" fill="#6bb83c"/>
<text transform="translate(148.00 384.50) scale(0.955 1)" font-size="5.95" fill="#25307a">International Manager</text>
<text transform="translate(377.60 384.60) scale(0.93 1)" font-size="6.4" text-anchor="end" fill="#4a4a4a" stroke="#4a4a4a" stroke-width="0.03">-0.21</text>
<text transform="translate(413.50 384.60) scale(0.93 1)" font-size="6.4" text-anchor="end" fill="#4a4a4a" stroke="#4a4a4a" stroke-width="0.03">30.94%</text>
<text transform="translate(448.60 384.60) scale(0.93 1)" font-size="6.4" text-anchor="end" fill="#4a4a4a" stroke="#4a4a4a" stroke-width="0.03">8.88</text>
<text transform="translate(484.00 384.60) scale(0.93 1)" font-size="6.4" text-anchor="end" fill="#4a4a4a" stroke="#4a4a4a" stroke-width="0.03">0.00</text>
<text transform="translate(523.80 384.60) scale(0.93 1)" font-size="6.4" text-anchor="end" fill="#4a4a4a" stroke="#4a4a4a" stroke-width="0.03">8.88</text>
<text transform="translate(563.10 384.60) scale(0.93 1)" font-size="6.4" text-anchor="end" fill="#4a4a4a" stroke="#4a4a4a" stroke-width="0.03">9.09</text>
<circle cx="140.5" cy="394.90" r="2.9" fill="#fff"/>
<circle cx="140.5" cy="394.90" r="1.85" fill="#6bb83c"/>
<text transform="translate(148.00 397.00) scale(0.955 1)" font-size="5.95" fill="#25307a">US Large Cap Manager</text>
<text transform="translate(377.60 397.10) scale(0.93 1)" font-size="6.4" text-anchor="end" fill="#4a4a4a" stroke="#4a4a4a" stroke-width="0.03">-0.04</text>
<text transform="translate(413.50 397.10) scale(0.93 1)" font-size="6.4" text-anchor="end" fill="#4a4a4a" stroke="#4a4a4a" stroke-width="0.03">32.87%</text>
<text transform="translate(448.60 397.10) scale(0.93 1)" font-size="6.4" text-anchor="end" fill="#4a4a4a" stroke="#4a4a4a" stroke-width="0.03">9.13</text>
<text transform="translate(484.00 397.10) scale(0.93 1)" font-size="6.4" text-anchor="end" fill="#4a4a4a" stroke="#4a4a4a" stroke-width="0.03">0.00</text>
<text transform="translate(523.80 397.10) scale(0.93 1)" font-size="6.4" text-anchor="end" fill="#4a4a4a" stroke="#4a4a4a" stroke-width="0.03">9.13</text>
<text transform="translate(563.10 397.10) scale(0.93 1)" font-size="6.4" text-anchor="end" fill="#4a4a4a" stroke="#4a4a4a" stroke-width="0.03">9.09</text>
<rect x="134.20" y="400.70" width="432.80" height="12.50" fill="#f0f0f0"/>
<circle cx="140.5" cy="407.40" r="2.9" fill="#fff"/>
<circle cx="140.5" cy="407.40" r="1.85" fill="#6bb83c"/>
<text transform="translate(148.00 409.50) scale(0.955 1)" font-size="5.95" fill="#25307a">Global Manager</text>
<text transform="translate(377.60 409.60) scale(0.93 1)" font-size="6.4" text-anchor="end" fill="#4a4a4a" stroke="#4a4a4a" stroke-width="0.03">0.04</text>
<text transform="translate(413.50 409.60) scale(0.93 1)" font-size="6.4" text-anchor="end" fill="#4a4a4a" stroke="#4a4a4a" stroke-width="0.03">33.78%</text>
<text transform="translate(448.60 409.60) scale(0.93 1)" font-size="6.4" text-anchor="end" fill="#4a4a4a" stroke="#4a4a4a" stroke-width="0.03">9.20</text>
<text transform="translate(484.00 409.60) scale(0.93 1)" font-size="6.4" text-anchor="end" fill="#4a4a4a" stroke="#4a4a4a" stroke-width="0.03">0.00</text>
<text transform="translate(523.80 409.60) scale(0.93 1)" font-size="6.4" text-anchor="end" fill="#4a4a4a" stroke="#4a4a4a" stroke-width="0.03">9.20</text>
<text transform="translate(563.10 409.60) scale(0.93 1)" font-size="6.4" text-anchor="end" fill="#4a4a4a" stroke="#4a4a4a" stroke-width="0.03">9.09</text>
<circle cx="140.5" cy="419.90" r="2.9" fill="#fff"/>
<circle cx="140.5" cy="419.90" r="1.85" fill="#6bb83c"/>
<text transform="translate(148.00 422.00) scale(0.955 1)" font-size="5.95" fill="#25307a">EM Manager</text>
<text transform="translate(377.60 422.10) scale(0.93 1)" font-size="6.4" text-anchor="end" fill="#4a4a4a" stroke="#4a4a4a" stroke-width="0.03">0.25</text>
<text transform="translate(413.50 422.10) scale(0.93 1)" font-size="6.4" text-anchor="end" fill="#4a4a4a" stroke="#4a4a4a" stroke-width="0.03">36.03%</text>
<text transform="translate(448.60 422.10) scale(0.93 1)" font-size="6.4" text-anchor="end" fill="#4a4a4a" stroke="#4a4a4a" stroke-width="0.03">9.31</text>
<text transform="translate(484.00 422.10) scale(0.93 1)" font-size="6.4" text-anchor="end" fill="#4a4a4a" stroke="#4a4a4a" stroke-width="0.03">0.00</text>
<text transform="translate(523.80 422.10) scale(0.93 1)" font-size="6.4" text-anchor="end" fill="#4a4a4a" stroke="#4a4a4a" stroke-width="0.03">9.31</text>
<text transform="translate(563.10 422.10) scale(0.93 1)" font-size="6.4" text-anchor="end" fill="#4a4a4a" stroke="#4a4a4a" stroke-width="0.03">9.09</text>
<rect x="134.20" y="425.70" width="432.80" height="12.50" fill="#f0f0f0"/>
<circle cx="140.5" cy="432.40" r="2.9" fill="#fff"/>
<circle cx="140.5" cy="432.40" r="1.85" fill="#6bb83c"/>
<text transform="translate(148.00 434.50) scale(0.955 1)" font-size="5.95" fill="#25307a">EM Manager 2</text>
<text transform="translate(377.60 434.60) scale(0.93 1)" font-size="6.4" text-anchor="end" fill="#4a4a4a" stroke="#4a4a4a" stroke-width="0.03">0.52</text>
<text transform="translate(413.50 434.60) scale(0.93 1)" font-size="6.4" text-anchor="end" fill="#4a4a4a" stroke="#4a4a4a" stroke-width="0.03">39.44%</text>
<text transform="translate(448.60 434.60) scale(0.93 1)" font-size="6.4" text-anchor="end" fill="#4a4a4a" stroke="#4a4a4a" stroke-width="0.03">8.63</text>
<text transform="translate(484.00 434.60) scale(0.93 1)" font-size="6.4" text-anchor="end" fill="#4a4a4a" stroke="#4a4a4a" stroke-width="0.03">0.00</text>
<text transform="translate(523.80 434.60) scale(0.93 1)" font-size="6.4" text-anchor="end" fill="#4a4a4a" stroke="#4a4a4a" stroke-width="0.03">8.63</text>
<text transform="translate(563.10 434.60) scale(0.93 1)" font-size="6.4" text-anchor="end" fill="#4a4a4a" stroke="#4a4a4a" stroke-width="0.03">9.09</text></svg></body></html>
